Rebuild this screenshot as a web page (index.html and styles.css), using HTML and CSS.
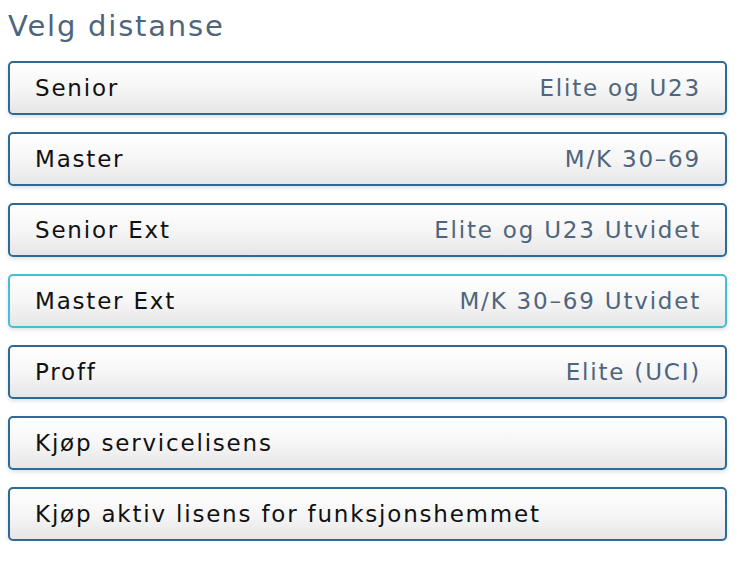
FILE: index.html
```html
<!DOCTYPE html>
<html lang="no">
<head>
  <meta charset="UTF-8">
  <meta name="viewport" content="width=device-width, initial-scale=1.0">
  <title>Velg distanse</title>
  <link rel="stylesheet" href="styles.css">
</head>
<body>
  <h2 class="title">Velg distanse</h2>
  <div class="choices">
    <button class="choice"><span class="name">Senior</span><span class="desc">Elite og U23</span></button>
    <button class="choice"><span class="name">Master</span><span class="desc">M/K 30–69</span></button>
    <button class="choice"><span class="name">Senior Ext</span><span class="desc">Elite og U23 Utvidet</span></button>
    <button class="choice active"><span class="name">Master Ext</span><span class="desc">M/K 30–69 Utvidet</span></button>
    <button class="choice"><span class="name">Proff</span><span class="desc">Elite (UCI)</span></button>
    <button class="choice"><span class="name">Kjøp servicelisens</span></button>
    <button class="choice"><span class="name">Kjøp aktiv lisens for funksjonshemmet</span></button>
  </div>
</body>
</html>
```

FILE: styles.css
```css
body {
  margin: 0;
  padding: 7px 13px 0 8px;
  background-color: #fff;
  font-family: 'DejaVu Sans', Verdana, sans-serif;
}
.title {
  margin: 0 0 16px 0;
  font-size: 29px;
  font-weight: normal;
  letter-spacing: 1.8px;
  color: #4e657c;
  line-height: 38px;
}
.choices {
  display: flex;
  flex-direction: column;
  gap: 17px;
}
.choice {
  display: flex;
  justify-content: space-between;
  align-items: center;
  height: 54px;
  padding: 0 24px 0 25px;
  border: 2px solid #2f6a94;
  border-radius: 5px;
  background: linear-gradient(to bottom, #ffffff 0%, #f6f6f6 50%, #e6e6e6 100%);
  box-shadow: 0 2px 4px rgba(0, 60, 110, 0.15);
  font-family: inherit;
  font-size: 23px;
  letter-spacing: 1.8px;
  color: #111;
  text-align: left;
  cursor: pointer;
}
.choice.active {
  border-color: #45bfd6;
}
.desc {
  color: #4e657c;
}
```
